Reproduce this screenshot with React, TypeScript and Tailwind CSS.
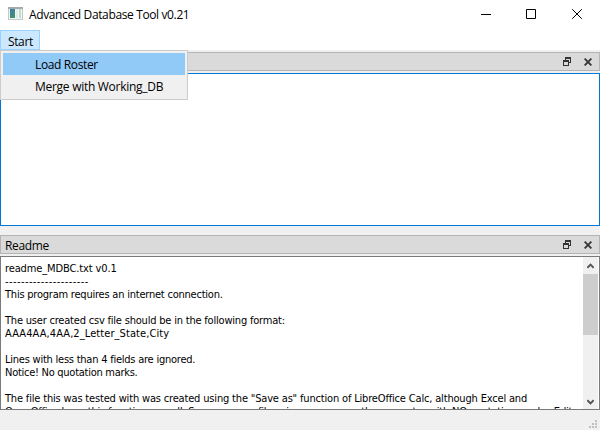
const readme: { text: string; track: string }[] = [
  { text: "readme_MDBC.txt v0.1", track: "tracking-[-0.12px]" },
  { text: "---------------------", track: "tracking-[0.41px]" },
  { text: "This program requires an internet connection.", track: "tracking-[-0.22px]" },
  { text: "", track: "" },
  { text: "The user created csv file should be in the following format:", track: "tracking-[-0.2px]" },
  { text: "AAA4AA,4AA,2_Letter_State,City", track: "tracking-[0.08px]" },
  { text: "", track: "" },
  { text: "Lines with less than 4 fields are ignored.", track: "tracking-[-0.23px]" },
  { text: "Notice! No quotation marks.", track: "tracking-[-0.27px]" },
  { text: "", track: "" },
  { text: 'The file this was tested with was created using the "Save as" function of LibreOffice Calc, although Excel and', track: "tracking-[-0.17px]" },
  { text: "OpenOffice have this function as well. Save your csv file using commas as the separator with NO quotation marks. Edit", track: "tracking-[-0.2px]" },
];

function DockBar({ title }: { title: string }) {
  return (
    <div className="flex h-[19px] shrink-0 items-center border border-[#b4b4b4] bg-[#dadada] pl-1 pr-[7px]">
      <span className="relative top-px leading-[17px]">{title}</span>
      <svg className="ml-auto" width="8" height="9" viewBox="0 0 8 9" fill="#333" shapeRendering="crispEdges">
        <path d="M2 0h6v2H2zM2 2h1v1H2zM7 2h1v4H7zM6 5h1v1H6z" />
        <path d="M0 3h6v6H0zM1 5v3h4V5z" fillRule="evenodd" />
      </svg>
      <svg className="ml-[13px]" width="8" height="8" viewBox="0 0 8 8" fill="none" stroke="#383838" strokeWidth="1.9">
        <path d="M0.6 0.6l6.8 6.8M7.4 0.6l-6.8 6.8" />
      </svg>
    </div>
  );
}

function ScrollBar() {
  return (
    <div className="mr-px flex w-[15px] shrink-0 flex-col items-center bg-[#f0f0f0]">
      <svg className="mt-[6px]" width="7" height="6" viewBox="0 0 7 6" fill="none" stroke="#555" strokeWidth="1.9">
        <path d="M0.4 4.8L3.5 1.6L6.6 4.8" />
      </svg>
      <div className="mt-[5px] h-[61px] w-[15px] bg-[#cdcdcd]" />
      <svg className="mb-[4px] mt-auto" width="7" height="6" viewBox="0 0 7 6" fill="none" stroke="#555" strokeWidth="1.9">
        <path d="M0.4 1.2L3.5 4.4L6.6 1.2" />
      </svg>
    </div>
  );
}

export default function App() {
  return (
    <div className="relative flex h-[430px] w-[600px] flex-col overflow-hidden bg-[#f0f0f0] font-['Open_Sans','Noto_Sans',sans-serif] text-[12px] tracking-[-0.37px] text-black">
      <header className="flex h-[30px] shrink-0 items-start bg-white pl-2">
        <svg className="mt-[7px]" width="15" height="13" viewBox="0 0 15 13">
          <defs>
            <linearGradient id="pane" x1="0" y1="0" x2="1" y2="1">
              <stop offset="0" stopColor="#3f78a8" />
              <stop offset="1" stopColor="#3f9a62" />
            </linearGradient>
          </defs>
          <rect width="15" height="13" fill="#c3c7ca" />
          <rect width="15" height="2" fill="#a3abb2" />
          <rect x="1" y="2" width="13" height="10" fill="#f2f4f4" />
          <rect x="2" y="2" width="5" height="9" fill="url(#pane)" />
          <rect x="8" y="2" width="2" height="9" fill="#dfeee9" />
          <rect x="11" y="2" width="2" height="9" fill="#c2dcca" />
        </svg>
        <span className="ml-[6px] mt-[6px] leading-[18px]">Advanced Database Tool v0.21</span>
        <svg className="ml-auto mr-[17px] mt-[9px]" width="102" height="11" viewBox="0 0 102 11" fill="none" stroke="#000">
          <path d="M0 5.5h10" />
          <path d="M45.5 0.5h9v9h-9z" />
          <path d="M91.2 0.2l9.6 9.6M100.8 0.2l-9.6 9.6" />
        </svg>
      </header>
      <nav className="flex h-5 shrink-0 bg-white">
        <button className="h-5 w-10 border border-[#99d1ff] bg-[#cce8ff] pl-[7px] pt-[2px] text-left leading-[18px] tracking-[-0.37px]">Start</button>
      </nav>
      <main className="flex flex-col pt-[2px]">
        <DockBar title="" />
        <div className="mt-[2px] h-[153px] border border-[#0078d7] bg-white" />
        <div className="mt-[9px] flex flex-col">
          <DockBar title="Readme" />
        </div>
        <div className="mt-[2px] flex h-[154px] overflow-hidden border border-[#7a7a7a] bg-white">
          <div className="min-w-0 flex-1 overflow-hidden whitespace-pre pl-1 pt-[5px] font-['DejaVu_Sans_Condensed','DejaVu_Sans',sans-serif] text-[11px]">
            {readme.map((l, i) => (
              <div key={i} className={`h-[13px] leading-[13px] ${l.track}`}>{l.text}</div>
            ))}
          </div>
          <ScrollBar />
        </div>
      </main>
      <footer className="flex flex-1 items-end justify-end pb-[2px] pr-[3px]">
        <svg width="8" height="8" viewBox="0 0 8 8" fill="#bfbfbf" shapeRendering="crispEdges">
          <path d="M6 0h2v2H6zM3 3h2v2H3zM6 3h2v2H6zM0 6h2v2H0zM3 6h2v2H3zM6 6h2v2H6z" />
        </svg>
      </footer>
      <div className="absolute left-0 top-[50px] h-[50px] w-[188px] border border-[#ccc] bg-[#f0f0f0] p-[2px]">
        <div className="h-[22px] bg-[#91c9f7] pl-8 pt-px leading-[22px]">Load Roster</div>
        <div className="h-[22px] pl-8 pt-px leading-[22px] tracking-[-0.28px]">Merge with Working_DB</div>
      </div>
    </div>
  );
}
